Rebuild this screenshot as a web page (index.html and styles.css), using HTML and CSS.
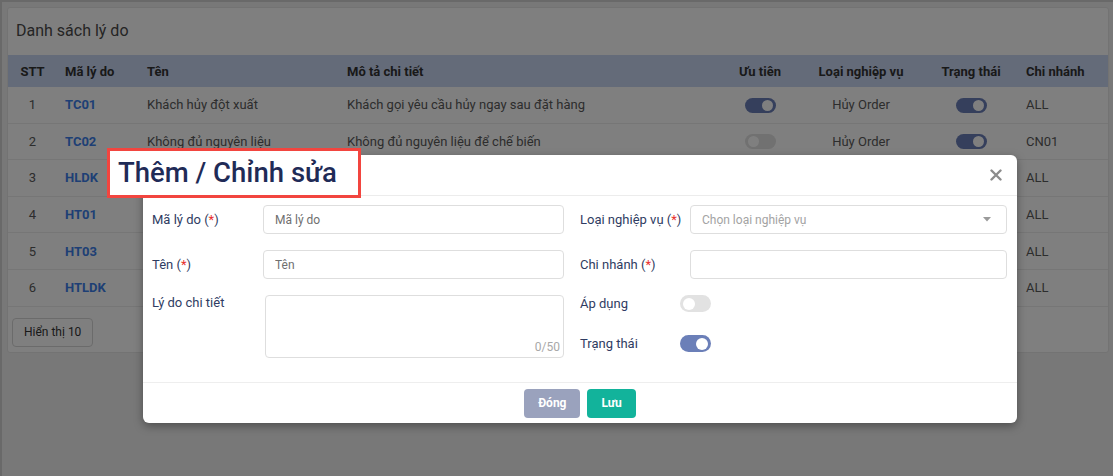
FILE: index.html
```html
<!DOCTYPE html>
<html lang="vi">
<head>
<meta charset="utf-8">
<title>Danh sách lý do</title>
<link rel="stylesheet" href="styles.css">
</head>
<body>
<div class="screen">
  <div class="card">
    <div class="card-title">Danh sách lý do</div>
    <table class="grid">
      <colgroup>
        <col class="w-stt"><col class="w-code"><col class="w-name"><col class="w-desc">
        <col class="w-prio"><col class="w-type"><col class="w-state"><col class="w-branch">
      </colgroup>
      <thead>
        <tr>
          <th class="ctr">STT</th><th>Mã lý do</th><th>Tên</th><th>Mô tả chi tiết</th>
          <th class="ctr">Ưu tiên</th><th class="ctr">Loại nghiệp vụ</th><th class="ctr">Trạng thái</th><th>Chi nhánh</th>
        </tr>
      </thead>
      <tbody>
        <tr>
          <td class="ctr">1</td><td class="code">TC01</td><td>Khách hủy đột xuất</td><td>Khách gọi yêu cầu hủy ngay sau đặt hàng</td>
          <td class="ctr"><span class="switch sm on"></span></td><td class="ctr">Hủy Order</td><td class="ctr"><span class="switch sm on"></span></td><td>ALL</td>
        </tr>
        <tr>
          <td class="ctr">2</td><td class="code">TC02</td><td>Không đủ nguyên liệu</td><td>Không đủ nguyên liệu để chế biến</td>
          <td class="ctr"><span class="switch sm"></span></td><td class="ctr">Hủy Order</td><td class="ctr"><span class="switch sm on"></span></td><td>CN01</td>
        </tr>
        <tr>
          <td class="ctr">3</td><td class="code">HLDK</td><td></td><td></td>
          <td class="ctr"></td><td class="ctr"></td><td class="ctr"></td><td>ALL</td>
        </tr>
        <tr>
          <td class="ctr">4</td><td class="code">HT01</td><td></td><td></td>
          <td class="ctr"></td><td class="ctr"></td><td class="ctr"></td><td>ALL</td>
        </tr>
        <tr>
          <td class="ctr">5</td><td class="code">HT03</td><td></td><td></td>
          <td class="ctr"></td><td class="ctr"></td><td class="ctr"></td><td>ALL</td>
        </tr>
        <tr>
          <td class="ctr">6</td><td class="code">HTLDK</td><td></td><td></td>
          <td class="ctr"></td><td class="ctr"></td><td class="ctr"></td><td>ALL</td>
        </tr>
      </tbody>
    </table>
    <div class="card-foot"><button class="pager" type="button">Hiển thị 10</button></div>
  </div>
</div>

<div class="overlay"></div>

<div class="modal">
  <div class="modal-head">
    <div class="modal-title">Thêm / Chỉnh sửa</div>
    <span class="close">
      <svg width="12" height="12" viewBox="0 0 12 12"><path d="M1.5 1.5 L10.5 10.5 M10.5 1.5 L1.5 10.5" stroke="#8c8c8c" stroke-width="2.4" stroke-linecap="round"/></svg>
    </span>
  </div>
  <div class="modal-body">
    <div class="col">
      <div class="field">
        <label class="lbl">Mã lý do (<span class="req">*</span>)</label>
        <input class="inp" type="text" placeholder="Mã lý do">
      </div>
      <div class="field">
        <label class="lbl">Tên (<span class="req">*</span>)</label>
        <input class="inp" type="text" placeholder="Tên">
      </div>
      <div class="field top">
        <label class="lbl">Lý do chi tiết</label>
        <div class="area"><span class="count">0/50</span></div>
      </div>
    </div>
    <div class="col">
      <div class="field">
        <label class="lbl">Loại nghiệp vụ (<span class="req">*</span>)</label>
        <div class="inp select"><span class="ph">Chọn loại nghiệp vụ</span>
          <svg class="caret" width="8" height="5" viewBox="0 0 8 5"><path d="M0 0 H8 L4 4.5 Z" fill="#9a9a9a"/></svg>
        </div>
      </div>
      <div class="field">
        <label class="lbl">Chi nhánh (<span class="req">*</span>)</label>
        <input class="inp" type="text">
      </div>
      <div class="toggles">
        <div class="trow"><span class="lbl t">Áp dụng</span><span class="switch"></span></div>
        <div class="trow"><span class="lbl t">Trạng thái</span><span class="switch on"></span></div>
      </div>
    </div>
  </div>
  <div class="modal-foot">
    <button class="btn btn-close" type="button">Đóng</button>
    <button class="btn btn-save" type="button">Lưu</button>
  </div>
</div>
</body>
</html>
```
FILE: styles.css
```css
* { box-sizing: border-box; }
html, body { margin: 0; padding: 0; }
body {
  font-family: Roboto, "Liberation Sans", Arial, sans-serif;
  background: #f0f0f0;
  width: 1113px;
  height: 476px;
  overflow: hidden;
  position: relative;
}
.screen {
  border-top: 2px solid #d2d2d2;
  border-left: 2px solid #d2d2d2;
  padding: 5px 4px 0 5px;
  height: 476px;
}
.card {
  background: #fff;
  border: 1px solid #e6e6e6;
  border-radius: 3px;
}
.card-title {
  height: 47px;
  line-height: 46px;
  padding-left: 8px;
  font-size: 16px;
  color: #4a4a4a;
}
.grid {
  width: 100%;
  table-layout: fixed;
  border-collapse: separate;
  border-spacing: 0;
  font-size: 13px;
  color: #5a5a5a;
}
.w-stt { width: 49px; }
.w-code { width: 82px; }
.w-name { width: 200px; }
.w-desc { width: 381px; }
.w-prio { width: 80px; }
.w-type { width: 122px; }
.w-state { width: 98px; }
.w-branch { width: 88px; }
.grid th {
  background: #c8d6f2;
  color: #333;
  font-weight: 700;
  height: 32px;
  text-align: left;
  padding: 0 8px;
  white-space: nowrap;
}
.grid td {
  height: 36.6px;
  padding: 0 8px;
  border-bottom: 1px solid #ececec;
  white-space: nowrap;
  overflow: hidden;
  vertical-align: middle;
}
.grid th:last-child, .grid td:last-child { padding-left: 6px; }
.grid .ctr { text-align: center; }
.grid .code { color: #3c7fea; font-weight: 700; }
.card-foot { padding: 11px 4px 5px; }
.pager {
  height: 29px;
  padding: 0 11px;
  border: 1px solid #d6d6d6;
  border-radius: 4px;
  background: #fff;
  font-family: inherit;
  font-size: 12px;
  color: #333;
}

.switch {
  display: inline-block;
  position: relative;
  width: 31px;
  height: 17px;
  border-radius: 9px;
  background: #e2e2e2;
  vertical-align: middle;
}
.switch::after {
  content: "";
  position: absolute;
  top: 2.5px;
  left: 3px;
  width: 12px;
  height: 12px;
  border-radius: 50%;
  background: #fff;
}
.switch.on { background: #6b7fb8; }
.switch.on::after { left: 16px; }
.switch.sm { height: 15px; }
.switch.sm::after { top: 2px; width: 11px; height: 11px; }
.switch.sm.on::after { left: 17px; }

.overlay {
  position: absolute;
  inset: 0;
  background: rgba(0, 0, 0, 0.5);
}

.modal {
  position: absolute;
  left: 143px;
  top: 155px;
  width: 874px;
  height: 268px;
  background: #fff;
  border-radius: 6px;
  box-shadow: 0 3px 10px rgba(0, 0, 0, 0.35);
  display: flex;
  flex-direction: column;
}
.modal-head {
  position: relative;
  height: 41px;
  border-bottom: 1px solid #ececec;
  flex: none;
}
.modal-title {
  position: absolute;
  left: -36px;
  top: -7px;
  width: 254px;
  height: 50px;
  border: 3px solid #f2453f;
  background: #fff;
  padding-left: 8px;
  font-size: 27.5px;
  line-height: 44px;
  font-weight: 500;
  color: #1f2b57;
  white-space: nowrap;
}
.close {
  position: absolute;
  right: 15px;
  top: 14px;
  width: 12px;
  height: 12px;
  display: flex;
}
.modal-body {
  flex: 1;
  display: grid;
  grid-template-columns: 412px 1fr;
  column-gap: 16px;
  padding: 9px 10px 0 9px;
}
.col {
  display: flex;
  flex-direction: column;
  gap: 16px;
}
.field {
  display: flex;
  align-items: center;
}
.field.top { align-items: flex-start; }
.lbl {
  width: 111px;
  flex: none;
  font-size: 13px;
  color: #2f3c62;
  line-height: 16px;
}
.col + .col .lbl { width: 110px; }
.req { color: #e8302c; }
.inp {
  flex: 1;
  height: 29px;
  border: 1px solid #dedede;
  border-radius: 4px;
  padding: 0 11px;
  font-family: inherit;
  font-size: 12px;
  color: #333;
  outline: none;
  background: #fff;
}
.inp::placeholder { color: #6f6f6f; }
.select {
  display: flex;
  align-items: center;
  justify-content: space-between;
}
.select .ph { color: #a3a3a3; }
.caret { margin-right: 4px; }
.area {
  flex: 1;
  height: 63px;
  margin-left: 2px;
  border: 1px solid #dedede;
  border-radius: 4px;
  display: flex;
  align-items: flex-end;
  justify-content: flex-end;
  padding: 0 3px 3px 0;
}
.count { font-size: 12px; color: #a8a8a8; }
.toggles {
  display: flex;
  flex-direction: column;
  gap: 23px;
}
.trow {
  display: flex;
  align-items: center;
  height: 17px;
}
.lbl.t, .col + .col .lbl.t { width: 100px; }
.modal-foot {
  flex: none;
  height: 41px;
  border-top: 1px solid #eeeeee;
  display: flex;
  align-items: center;
  justify-content: center;
  gap: 7px;
}
.btn {
  height: 29px;
  border: none;
  border-radius: 4px;
  padding: 0 14px;
  font-family: inherit;
  font-size: 12px;
  font-weight: 700;
  color: #fff;
}
.btn-close { background: #9aa2bd; }
.btn-save { background: #12b39b; }
```
